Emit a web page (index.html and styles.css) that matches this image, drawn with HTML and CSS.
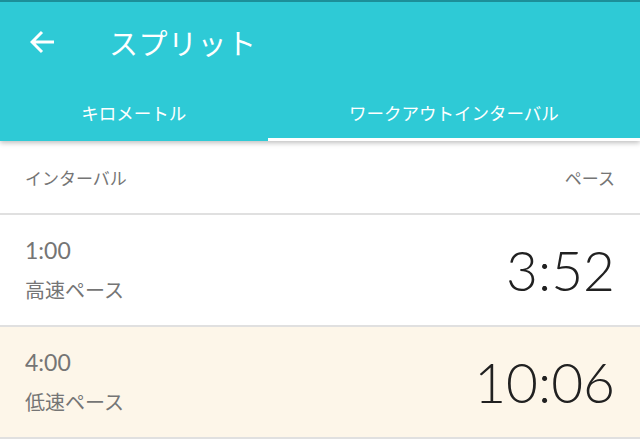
FILE: index.html
```html
<!DOCTYPE html>
<html lang="ja">
<head>
    <meta charset="UTF-8">
    <meta name="viewport" content="width=device-width, initial-scale=1.0">
    <title>スプリット</title>
    <link rel="stylesheet" href="styles.css">
</head>
<body>
    <div class="appbar">
        <div class="toolbar">
            <button class="back" aria-label="戻る">
                <svg width="26" height="24" viewBox="0 0 26 24">
                    <path d="M24 12H3M12 2L2 12l10 10" fill="none" stroke="#fff" stroke-width="3"/>
                </svg>
            </button>
            <div class="title">スプリット</div>
        </div>
        <div class="tabs">
            <div class="tab">キロメートル</div>
            <div class="tab active">ワークアウトインターバル</div>
        </div>
    </div>

    <div class="list">
        <div class="list-head">
            <span>インターバル</span>
            <span>ペース</span>
        </div>
        <div class="split">
            <div class="split-info">
                <div class="split-time">1:00</div>
                <div class="split-name">高速ペース</div>
            </div>
            <div class="split-pace">3:52</div>
        </div>
        <div class="split slow">
            <div class="split-info">
                <div class="split-time">4:00</div>
                <div class="split-name">低速ペース</div>
            </div>
            <div class="split-pace">10:06</div>
        </div>
    </div>
</body>
</html>
```

FILE: styles.css
```css
body {
    margin: 0;
    background: #fff;
    font-family: Lato, "Noto Sans CJK JP", sans-serif;
    overflow: hidden;
}
.appbar {
    background-color: #2ecad6;
    border-top: 2px solid #1c8f99;
    box-shadow: 0 2px 5px rgba(0, 0, 0, 0.25);
    position: relative;
    z-index: 1;
}
.toolbar {
    display: flex;
    align-items: center;
    height: 80px;
}
.back {
    background: none;
    border: none;
    padding: 0;
    margin-left: 30px;
    width: 26px;
    height: 24px;
    display: flex;
}
.title {
    color: #fff;
    font-family: "Noto Sans CJK JP", sans-serif;
    font-size: 29px;
    margin-left: 53px;
    letter-spacing: 0.5px;
}
.tabs {
    display: flex;
    height: 59px;
}
.tab {
    flex: 1 1 auto;
    display: flex;
    justify-content: center;
    align-items: center;
    color: #fff;
    font-family: "Noto Sans CJK JP", sans-serif;
    font-size: 17.5px;
    border-bottom: 3px solid transparent;
    box-sizing: border-box;
    padding-top: 4px;
}
.tab.active {
    border-bottom-color: #fff;
}
.list-head {
    display: flex;
    justify-content: space-between;
    align-items: center;
    height: 72px;
    padding: 0 25px;
    color: #757575;
    font-family: "Noto Sans CJK JP", sans-serif;
    font-size: 17px;
    border-bottom: 2px solid #e0e0e0;
}
.split {
    display: flex;
    justify-content: space-between;
    align-items: center;
    padding: 15px 25px;
    border-bottom: 2px solid #e0e0e0;
}
.split.slow {
    background-color: #fdf6e9;
}
.split-info {
    color: #757575;
}
.split-time {
    font-size: 23px;
    line-height: 40px;
}
.split-name {
    font-family: "Noto Sans CJK JP", sans-serif;
    font-size: 20px;
    line-height: 40px;
}
.split-pace {
    color: #212121;
    font-size: 55px;
    font-weight: 300;
    line-height: 1;
}
```
